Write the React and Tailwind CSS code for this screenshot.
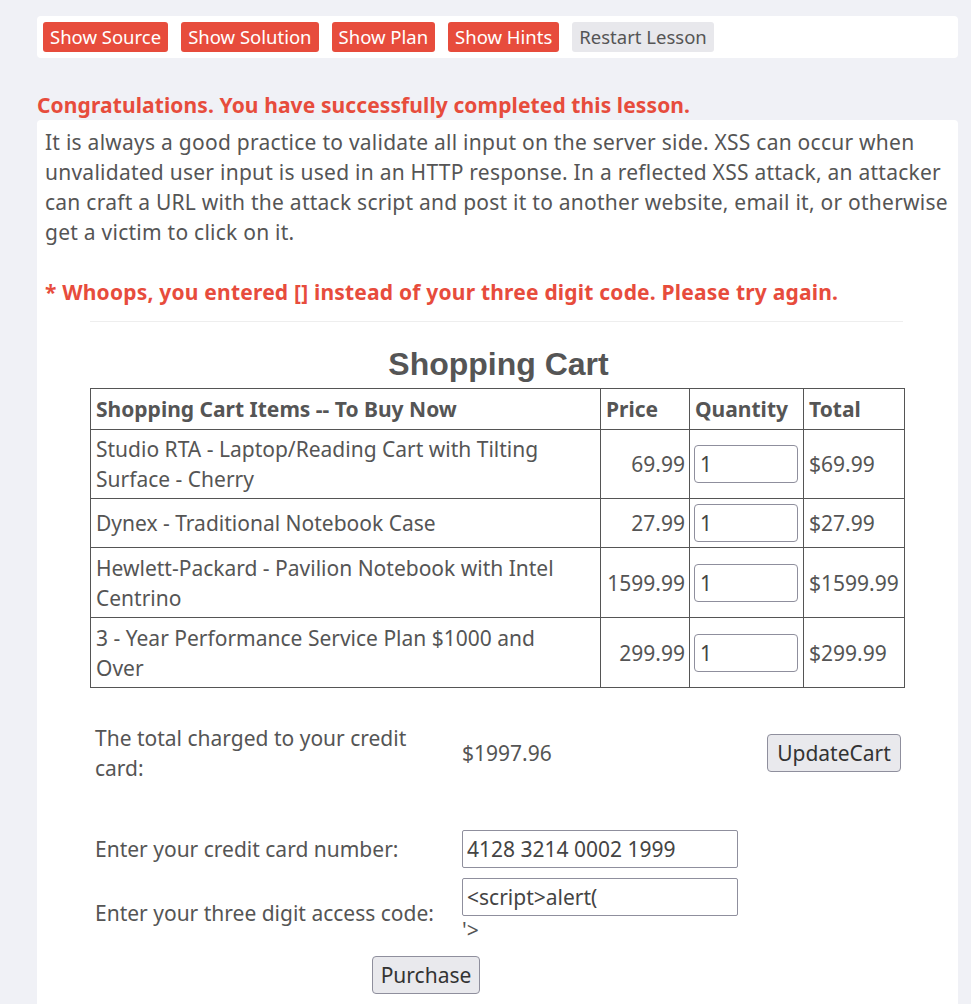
const items = [
  { name: "Studio RTA - Laptop/Reading Cart with Tilting Surface - Cherry", price: "69.99", total: "$69.99", h: "h-[69px]" },
  { name: "Dynex - Traditional Notebook Case", price: "27.99", total: "$27.99", h: "h-[49px]" },
  { name: "Hewlett-Packard - Pavilion Notebook with Intel Centrino", price: "1599.99", total: "$1599.99", h: "h-[70px]" },
  { name: "3 - Year Performance Service Plan $1000 and Over", price: "299.99", total: "$299.99", h: "h-[70px]" },
];

function RedButton({ children }) {
  return (
    <button className="h-[30px] px-[7px] rounded-[3px] bg-[#e74c3c] text-white text-[18.5px] leading-none">
      {children}
    </button>
  );
}

function GrayButton({ children, className = "" }) {
  return (
    <button className={`border border-[#8f8f9d] rounded-[4px] bg-[#e9e9ed] text-[#333] text-[21px] leading-none ${className}`}>
      {children}
    </button>
  );
}

export default function App() {
  return (
    <div className="min-h-screen bg-[#f0f1f6] px-[37px] pt-[16px] text-[#555] font-['Noto_Sans','Open_Sans',sans-serif] overflow-hidden">
      {/* lesson menu */}
      <div className="w-[921px] h-[42px] bg-white rounded-[4px] flex items-center gap-[13px] px-[6px]">
        <RedButton>Show Source</RedButton>
        <RedButton>Show Solution</RedButton>
        <RedButton>Show Plan</RedButton>
        <RedButton>Show Hints</RedButton>
        <button className="h-[30px] px-[7px] rounded-[3px] bg-[#e8e8ec] text-[#555] text-[18.5px] leading-none">
          Restart Lesson
        </button>
      </div>

      <div className="mt-[34px] text-[#e74c3c] font-bold text-[21px] tracking-[0.1px] leading-[26px]">
        Congratulations. You have successfully completed this lesson.
      </div>

      <div className="w-[921px] bg-white rounded-t-[4px] mt-[2px] px-[8px] pt-[7px] pb-[20px]">
        <p className="text-[21px] tracking-[0.25px] leading-[30px]">
          It is always a good practice to validate all input on the server side. XSS can occur when unvalidated user
          input is used in an HTTP response. In a reflected XSS attack, an attacker can craft a URL with the attack
          script and post it to another website, email it, or otherwise get a victim to click on it.
        </p>
        <p className="mt-[30px] text-[#e74c3c] font-bold text-[21px] tracking-[0.2px] leading-[30px]">
          * Whoops, you entered [] instead of your three digit code. Please try again.
        </p>

        <div className="ml-[45px] w-[813px] mt-[14px] border-t border-[#eee]" />

        <div className="ml-[45px] w-[815px]">
          <h2 className="text-center font-['Liberation_Sans',Arial,sans-serif] font-bold text-[32px] leading-[34px] mt-[25px] mb-[7px] pl-[2px]">
            Shopping Cart
          </h2>
          <table className="w-[815px] border-collapse text-[21px] leading-[30px]">
            <thead>
              <tr className="h-[41px]">
                <th className="w-[510px] border border-[#555] text-left font-bold px-[5px]">Shopping Cart Items -- To Buy Now</th>
                <th className="w-[89px] border border-[#555] text-left font-bold px-[5px]">Price</th>
                <th className="w-[114px] border border-[#555] text-left font-bold px-[5px]">Quantity</th>
                <th className="border border-[#555] text-left font-bold px-[5px]">Total</th>
              </tr>
            </thead>
            <tbody>
              {items.map((it) => (
                <tr key={it.name} className={it.h}>
                  <td className="border border-[#555] px-[5px] pr-[40px]">{it.name}</td>
                  <td className="border border-[#555] px-[4px] text-right">{it.price}</td>
                  <td className="border border-[#555] px-[4px]">
                    <input
                      readOnly
                      value="1"
                      className="w-[104px] h-[38px] border border-[#8f8f9d] rounded-[4px] px-[5px] text-[21px] text-[#444] outline-none"
                    />
                  </td>
                  <td className="border border-[#555] px-[5px]">{it.total}</td>
                </tr>
              ))}
            </tbody>
          </table>

          {/* totals */}
          <div className="mt-[35px] flex items-center text-[21px] leading-[30px]">
            <div className="w-[372px] pl-[5px] pr-[30px]">The total charged to your credit card:</div>
            <div className="flex-1">$1997.96</div>
            <GrayButton className="h-[38px] w-[134px] mr-[4px]">UpdateCart</GrayButton>
          </div>

          <div className="mt-[47px] flex items-center text-[21px] leading-[30px]">
            <div className="w-[372px] pl-[5px]">Enter your credit card number:</div>
            <input
              readOnly
              value="4128 3214 0002 1999"
              className="w-[276px] h-[38px] border border-[#8f8f9d] rounded-[2px] px-[4px] text-[21px] text-[#444] outline-none"
            />
          </div>

          <div className="mt-[10px] flex items-start text-[21px] leading-[30px]">
            <div className="w-[372px] pl-[5px] pt-[20px]">Enter your three digit access code:</div>
            <div>
              <input
                readOnly
                value="<script>alert("
                className="w-[276px] h-[38px] border border-[#8f8f9d] rounded-[2px] px-[4px] text-[21px] text-[#444] outline-none"
              />
              <div className="leading-[28px] h-[24px]">'&gt;</div>
            </div>
          </div>

          <div className="mt-[16px] pl-[282px]">
            <GrayButton className="h-[38px] w-[108px]">Purchase</GrayButton>
          </div>
        </div>
      </div>
    </div>
  );
}
